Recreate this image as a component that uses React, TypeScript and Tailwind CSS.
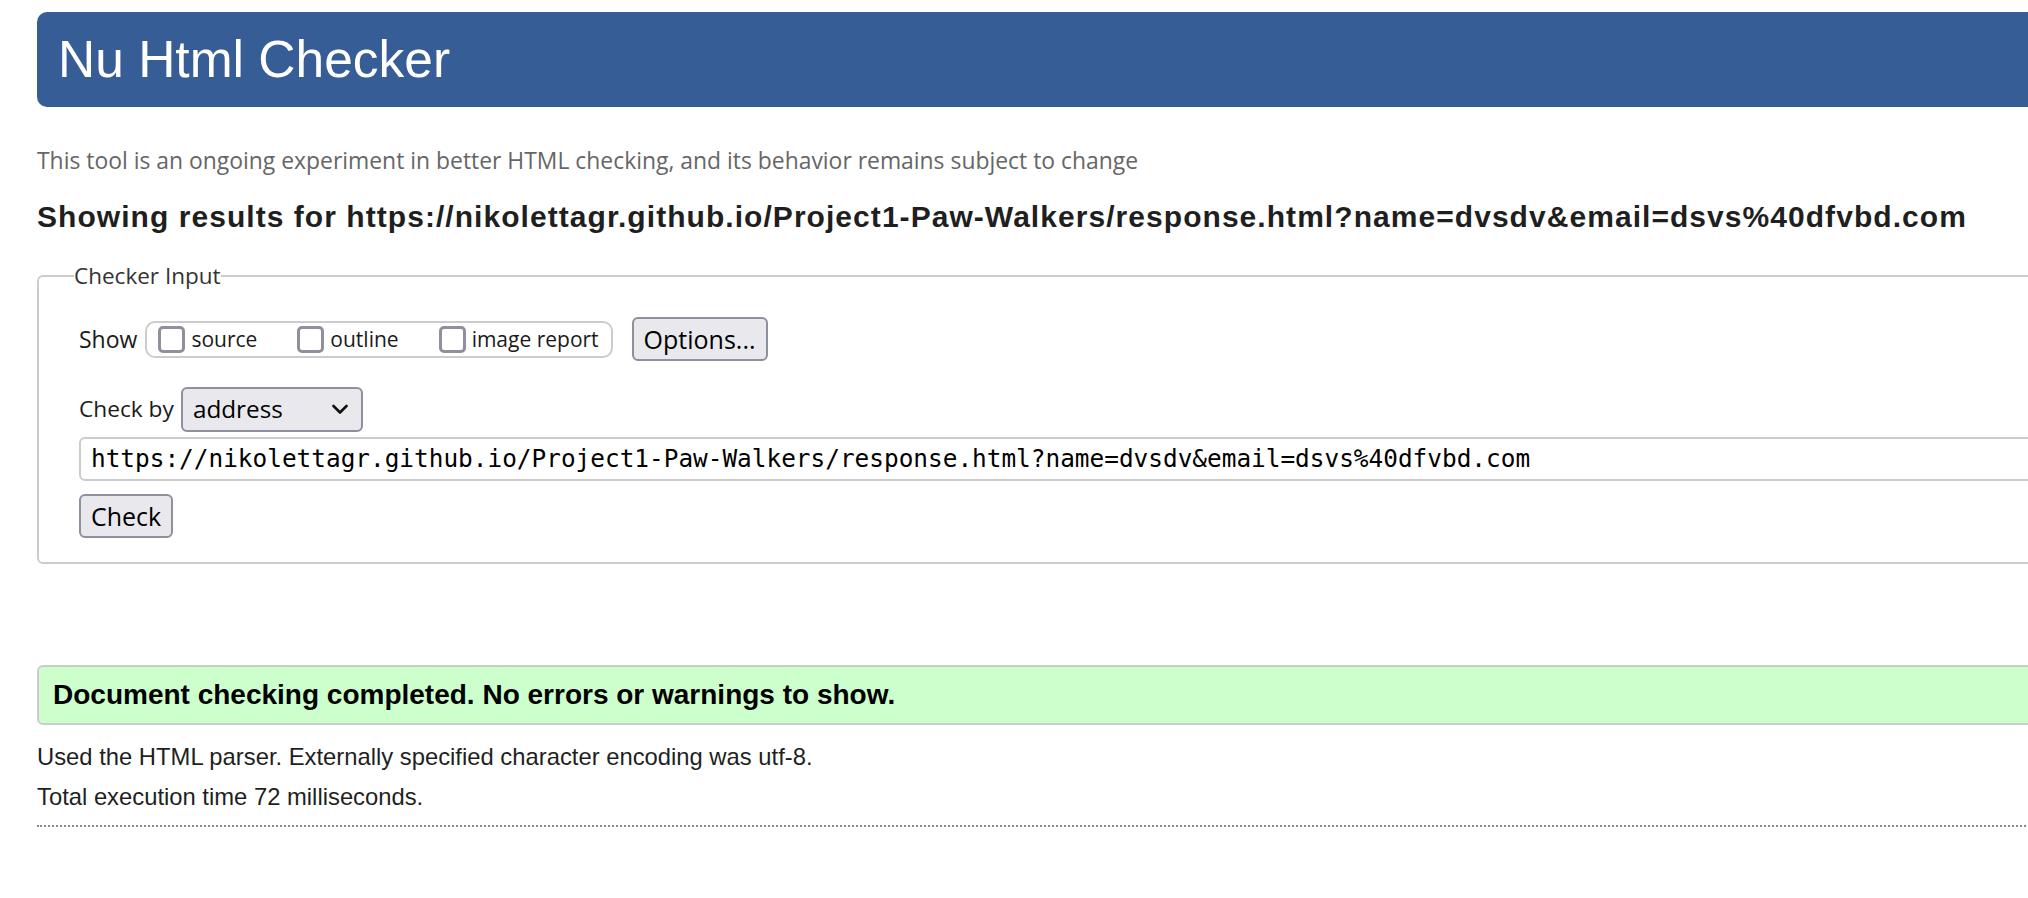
import React from 'react';

const sans = "font-['Liberation_Sans',Arial,sans-serif]";
const ui = "font-['Open_Sans','Noto_Sans',sans-serif]";

const TEST_URL =
  'https://nikolettagr.github.io/Project1-Paw-Walkers/response.html?name=dvsdv&email=dsvs%40dfvbd.com';

const CheckOption: React.FC<{ label: string }> = ({ label }) => (
  <label className="flex items-center gap-[6px] cursor-pointer select-none">
    <input
      type="checkbox"
      className="appearance-none w-[27px] h-[27px] border-[3px] border-[#8f8f9d] rounded-[5px] bg-white"
    />
    <span className="text-[21px] leading-[28px] text-[#1a1a1a]">{label}</span>
  </label>
);

export default function App() {
  return (
    <div className="w-screen h-screen overflow-hidden bg-white">
      <div className={`w-[2140px] ml-[37px] ${sans}`}>
        <h1 className="mt-[12px] h-[95px] rounded-[10px] bg-[#365d95] flex items-center pl-[21px] text-white text-[51.5px] font-normal">
          Nu Html Checker
        </h1>

        <p className={`mt-[39px] h-[30px] leading-[30px] text-[22.9px] text-[#666666] ${ui}`}>
          This tool is an ongoing experiment in better HTML checking, and its behavior remains subject to change
        </p>

        <h2 className="mt-[26px] h-[30px] leading-[30px] text-[30px] tracking-[1.05px] font-bold text-[#1f1f1f]">
          Showing results for {TEST_URL}
        </h2>

        <fieldset className={`mt-[29px] border-2 border-[#cccccc] rounded-[6px] px-[40px] pt-[26px] pb-[24px] ${ui}`}>
          <legend className="-ml-[5px] px-0 text-[22.5px] leading-[30px] text-[#333333]">Checker Input</legend>

          <div className="flex items-center h-[44px]">
            <span className="text-[23px] text-[#1a1a1a] mr-[8px]">Show</span>
            <div className="flex items-center gap-[40px] h-[37px] border-2 border-[#cccccc] rounded-[10px] pl-[11px] pr-[12px]">
              <CheckOption label="source" />
              <CheckOption label="outline" />
              <CheckOption label="image report" />
            </div>
            <button className="ml-[19px] h-[44px] px-[10px] bg-[#e9e9ed] border-2 border-[#8f8f9d] rounded-[6px] text-[25px] text-black leading-none">
              Options...
            </button>
          </div>

          <div className="flex items-center mt-[26px] h-[45px]">
            <span className="text-[22.7px] text-[#1a1a1a] mr-[7px]">Check by</span>
            <div className="w-[182px] h-[45px] flex items-center justify-between pl-[10px] pr-[13px] bg-[#e9e9ed] border-2 border-[#8f8f9d] rounded-[6px]">
              <span className="text-[24.3px] text-black leading-none">address</span>
              <svg width="16" height="11" viewBox="0 0 16 11" fill="none">
                <path d="M1.5 2 L8 8.5 L14.5 2" stroke="#111" strokeWidth="2.6" strokeLinecap="round" strokeLinejoin="round" />
              </svg>
            </div>
          </div>

          <div className="mt-[5px] h-[44px] w-full border-2 border-[#cccccc] rounded-[6px] flex items-center pl-[10px]">
            <span className="font-['DejaVu_Sans_Mono',monospace] text-[24.4px] text-black leading-none">{TEST_URL}</span>
          </div>

          <button className="mt-[13px] h-[44px] px-[10px] bg-[#e9e9ed] border-2 border-[#8f8f9d] rounded-[6px] text-[25px] text-black leading-none">
            Check
          </button>
        </fieldset>

        <div className="mt-[101px] h-[60px] bg-[#ccffcc] border-2 border-[#cccccc] rounded-[6px] flex items-center pl-[14px]">
          <span className="text-[28px] font-bold text-black">Document checking completed. No errors or warnings to show.</span>
        </div>

        <p className="mt-[17px] h-[30px] leading-[30px] text-[23.8px] text-[#1f1f1f]">
          Used the HTML parser. Externally specified character encoding was utf-8.
        </p>
        <p className="mt-[10px] h-[30px] leading-[30px] text-[23.8px] text-[#1f1f1f]">
          Total execution time 72 milliseconds.
        </p>
        <div className="mt-[13px] border-t-2 border-dotted border-[#888888]" />
      </div>
    </div>
  );
}
